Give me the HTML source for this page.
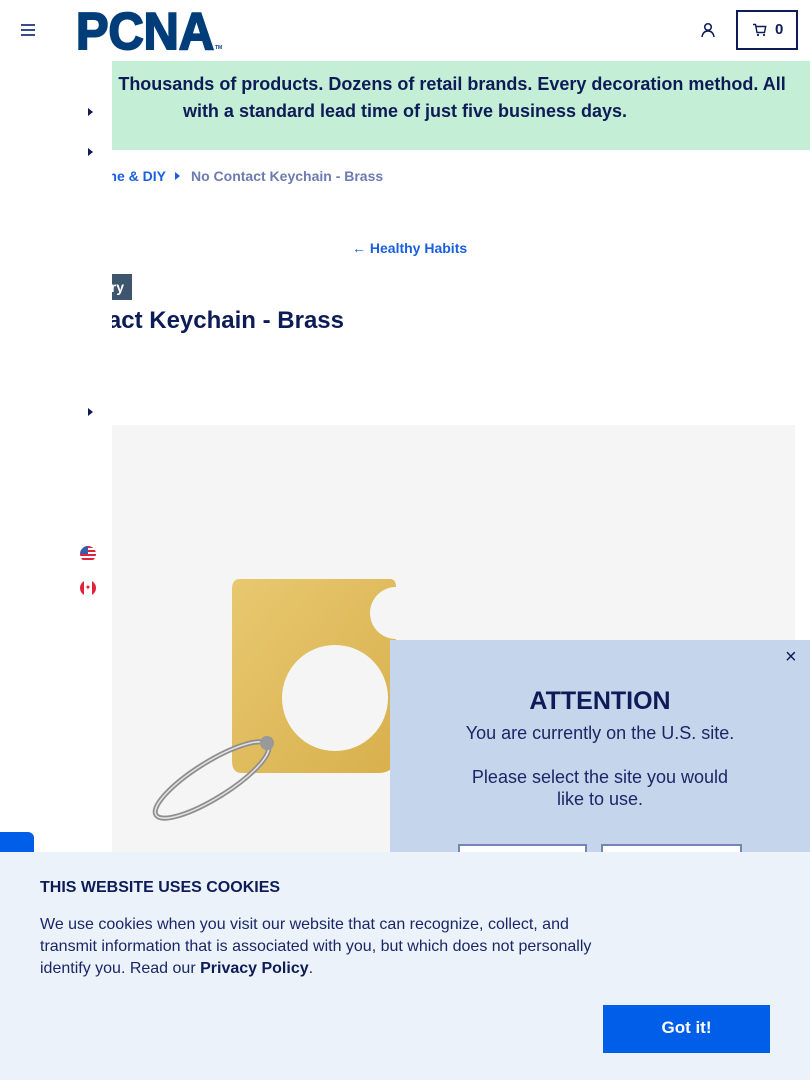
<!DOCTYPE html>
<html><head><meta charset="utf-8"><style>
*{margin:0;padding:0;box-sizing:border-box}
body{width:810px;height:1080px;overflow:hidden;position:relative;background:#fff;font-family:"Liberation Sans",Arial,sans-serif;color:#0d1b57}
.a{position:absolute}
</style></head><body>
<!-- header -->
<div class="a" style="left:21px;top:24px;width:14px;height:2px;background:#3b4a8a;box-shadow:0 5px 0 #3b4a8a,0 10px 0 #3b4a8a"></div>
<svg class="a" style="left:74px;top:6px" width="152" height="48" viewBox="0 0 152 48"><text x="2" y="43" font-family="Liberation Sans" font-weight="900" font-size="52" fill="#003d79" stroke="#003d79" stroke-width="2" textLength="138" lengthAdjust="spacingAndGlyphs">PCNA</text><text x="141" y="43" font-family="Liberation Sans" font-size="5" font-weight="bold" fill="#003d79">TM</text></svg>
<svg class="a" style="left:700px;top:22px" width="16" height="16" viewBox="0 0 16 16"><circle cx="8" cy="5" r="3.3" fill="none" stroke="#0d1b57" stroke-width="1.5"/><path d="M2 15 Q3 9 8 9 Q13 9 14 15" fill="none" stroke="#0d1b57" stroke-width="1.5"/></svg>
<div class="a" style="left:736px;top:10px;width:62px;height:40px;border:2px solid #0d1b57"></div>
<svg class="a" style="left:752px;top:23px" width="15" height="14" viewBox="0 0 15 14"><path d="M1 1.5h2.5l1.5 8h7.5l1.2-6H4.2" fill="none" stroke="#0d1b57" stroke-width="1.4"/><circle cx="6" cy="12" r="1.1" fill="#0d1b57"/><circle cx="12" cy="12" r="1.1" fill="#0d1b57"/></svg>
<div class="a" style="left:775px;top:21px;font-size:15px;font-weight:bold">0</div>
<!-- green banner -->
<div class="a" style="left:0;top:61px;width:810px;height:89px;background:#c4eed6"></div>
<div class="a" style="left:0;top:71px;width:810px;text-align:center;font-size:18px;font-weight:bold;line-height:27px;white-space:nowrap;padding-left:74px">✓ Thousands of products. Dozens of retail brands. Every decoration method. All<br><span style="margin-left:-74px">with a standard lead time of just five business days.</span></div>
<!-- breadcrumb -->
<div class="a" style="left:0;top:168px;width:166px;text-align:right;font-size:14px;font-weight:bold;color:#1a5fe0;white-space:nowrap">Home &amp; DIY</div>
<div class="a" style="left:175px;top:172px;width:0;height:0;border-left:5px solid #1a5fe0;border-top:4px solid transparent;border-bottom:4px solid transparent"></div>
<div class="a" style="left:191px;top:168px;font-size:14px;font-weight:bold;color:#6c7cb2;white-space:nowrap">No Contact Keychain - Brass</div>
<div class="a" style="left:352px;top:240px;font-size:14px;font-weight:bold;color:#1a5fe0">← Healthy Habits</div>
<div class="a" style="left:40px;top:274px;width:92px;height:26px;background:#3d566e;color:#fff;font-size:14px;font-weight:bold;text-align:right;padding:5px 8px 0 0">Accessory</div>
<div class="a" style="left:0;top:307px;width:344px;text-align:right;font-size:24px;font-weight:bold;white-space:nowrap">No Contact Keychain - Brass</div>
<!-- image -->
<div class="a" style="left:112px;top:425px;width:683px;height:440px;background:#f5f5f5"></div>
<svg class="a" style="left:112px;top:425px" width="683" height="440" viewBox="0 0 683 440">
<defs><linearGradient id="g" x1="0" y1="0" x2="1" y2="1"><stop offset="0" stop-color="#e8c870"/><stop offset="1" stop-color="#d8b04c"/></linearGradient></defs>
<path d="M128 154 h150 q6 0 6 8 v0 a26 26 0 0 0 0 52 v116 q0 18 -18 18 h-136 q-10 0 -10 -12 v-172 q0 -10 8 -10z" fill="url(#g)"/>
<circle cx="223" cy="273" r="53" fill="#f5f5f5"/>
<ellipse cx="100" cy="355" rx="66" ry="18" transform="rotate(-32 100 355)" fill="none" stroke="#8e8e8e" stroke-width="5"/>
<ellipse cx="100" cy="355" rx="66" ry="18" transform="rotate(-32 100 355)" fill="none" stroke="#e2e2e2" stroke-width="1.5"/>
<circle cx="155" cy="318" r="7" fill="#999"/>
</svg>
<!-- sidebar -->
<div class="a" style="left:0;top:61px;width:112px;height:790px;background:#fff"></div>
<div class="a" style="left:88px;top:108px;width:0;height:0;border-left:5px solid #0d1b57;border-top:4.5px solid transparent;border-bottom:4.5px solid transparent"></div>
<div class="a" style="left:88px;top:148px;width:0;height:0;border-left:5px solid #0d1b57;border-top:4.5px solid transparent;border-bottom:4.5px solid transparent"></div>
<div class="a" style="left:88px;top:408px;width:0;height:0;border-left:5px solid #0d1b57;border-top:4.5px solid transparent;border-bottom:4.5px solid transparent"></div>
<div class="a" style="left:80px;top:546px;width:16px;height:16px;border-radius:50%;background:repeating-linear-gradient(#e0233a 0 2px,#fff 2px 4px);overflow:hidden"><div style="width:8px;height:8px;background:#3b5aa8"></div></div>
<div class="a" style="left:80px;top:580px;width:16px;height:16px;border-radius:50%;background:linear-gradient(90deg,#e0233a 0 4px,#fff 4px 12px,#e0233a 12px);text-align:center;color:#e0233a;font-size:8px;line-height:16px">✦</div>
<div class="a" style="left:0;top:832px;width:34px;height:30px;background:#005ee8;border-radius:0 6px 0 0"></div>
<!-- modal -->
<div class="a" style="left:390px;top:640px;width:420px;height:220px;background:#c5d5eb"></div>
<div class="a" style="left:785px;top:646px;font-size:20px;color:#0d1b57">×</div>
<div class="a" style="left:390px;top:687px;width:420px;text-align:center;font-size:25px;font-weight:bold">ATTENTION</div>
<div class="a" style="left:390px;top:722px;width:420px;text-align:center;font-size:18px;line-height:22px;color:#1a2766">You are currently on the U.S. site.<br><br>Please select the site you would<br>like to use.</div>
<div class="a" style="left:458px;top:844px;width:129px;height:20px;background:#fff;border:2px solid #7585ba"></div>
<div class="a" style="left:601px;top:844px;width:141px;height:20px;background:#fff;border:2px solid #7585ba"></div>
<!-- cookie -->
<div class="a" style="left:0;top:852px;width:810px;height:228px;background:#ebf2fa"></div>
<div class="a" style="left:40px;top:879px;font-size:16px;font-weight:bold">THIS WEBSITE USES COOKIES</div>
<div class="a" style="left:40px;top:914px;width:560px;font-size:16px;line-height:22px;color:#1a2766">We use cookies when you visit our website that can recognize, collect, and transmit information that is associated with you, but which does not personally identify you. Read our <b style="color:#0d1b57">Privacy Policy</b>.</div>
<div class="a" style="left:603px;top:1005px;width:167px;height:48px;background:#005ee8;color:#fff;font-size:17px;font-weight:bold;text-align:center;line-height:46px">Got it!</div>
</body></html>
